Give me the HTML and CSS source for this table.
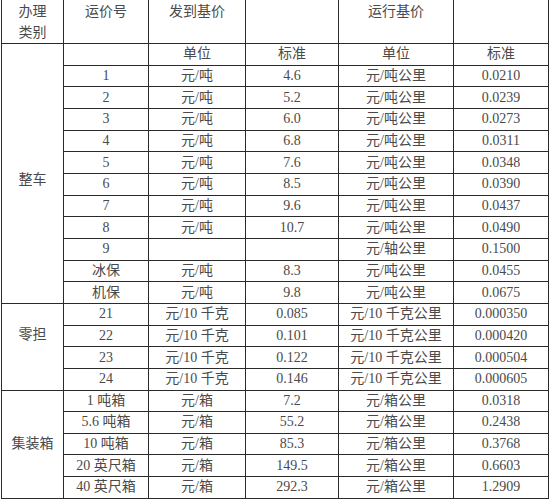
FILE: index.html
```html
<!DOCTYPE html>
<html lang="zh">
<head>
<meta charset="utf-8">
<link rel="stylesheet" href="styles.css">
</head>
<body>
<table class="rates">
  <colgroup>
    <col class="c1"><col class="c2"><col class="c3"><col class="c4"><col class="c5"><col class="c6">
  </colgroup>
  <tr class="head">
    <td>办理<br>类别</td>
    <td>运价号</td>
    <td>发到基价</td>
    <td></td>
    <td>运行基价</td>
    <td></td>
  </tr>
  <tr>
    <td rowspan="12" class="group g-whole">整车</td>
    <td></td><td>单位</td><td>标准</td><td>单位</td><td>标准</td>
  </tr>
  <tr><td>1</td><td>元/吨</td><td>4.6</td><td>元/吨公里</td><td>0.0210</td></tr>
  <tr><td>2</td><td>元/吨</td><td>5.2</td><td>元/吨公里</td><td>0.0239</td></tr>
  <tr><td>3</td><td>元/吨</td><td>6.0</td><td>元/吨公里</td><td>0.0273</td></tr>
  <tr><td>4</td><td>元/吨</td><td>6.8</td><td>元/吨公里</td><td>0.0311</td></tr>
  <tr><td>5</td><td>元/吨</td><td>7.6</td><td>元/吨公里</td><td>0.0348</td></tr>
  <tr><td>6</td><td>元/吨</td><td>8.5</td><td>元/吨公里</td><td>0.0390</td></tr>
  <tr><td>7</td><td>元/吨</td><td>9.6</td><td>元/吨公里</td><td>0.0437</td></tr>
  <tr><td>8</td><td>元/吨</td><td>10.7</td><td>元/吨公里</td><td>0.0490</td></tr>
  <tr><td>9</td><td></td><td></td><td>元/轴公里</td><td>0.1500</td></tr>
  <tr><td>冰保</td><td>元/吨</td><td>8.3</td><td>元/吨公里</td><td>0.0455</td></tr>
  <tr><td>机保</td><td>元/吨</td><td>9.8</td><td>元/吨公里</td><td>0.0675</td></tr>
  <tr>
    <td rowspan="4" class="group g-less">零担</td>
    <td>21</td><td>元/10 千克</td><td>0.085</td><td>元/10 千克公里</td><td>0.000350</td>
  </tr>
  <tr><td>22</td><td>元/10 千克</td><td>0.101</td><td>元/10 千克公里</td><td>0.000420</td></tr>
  <tr><td>23</td><td>元/10 千克</td><td>0.122</td><td>元/10 千克公里</td><td>0.000504</td></tr>
  <tr><td>24</td><td>元/10 千克</td><td>0.146</td><td>元/10 千克公里</td><td>0.000605</td></tr>
  <tr>
    <td rowspan="5" class="group">集装箱</td>
    <td>1 吨箱</td><td>元/箱</td><td>7.2</td><td>元/箱公里</td><td>0.0318</td>
  </tr>
  <tr><td>5.6 吨箱</td><td>元/箱</td><td>55.2</td><td>元/箱公里</td><td>0.2438</td></tr>
  <tr><td>10 吨箱</td><td>元/箱</td><td>85.3</td><td>元/箱公里</td><td>0.3768</td></tr>
  <tr><td>20 英尺箱</td><td>元/箱</td><td>149.5</td><td>元/箱公里</td><td>0.6603</td></tr>
  <tr><td>40 英尺箱</td><td>元/箱</td><td>292.3</td><td>元/箱公里</td><td>1.2909</td></tr>
</table>
</body>
</html>
```

FILE: styles.css
```css
html, body {
  margin: 0;
  padding: 0;
  background: #ffffff;
}

body {
  font-family: "Liberation Serif", "Noto Sans CJK SC", serif;
  font-size: 14px;
  color: #4a4a4a;
}

.rates {
  border-collapse: collapse;
  table-layout: fixed;
  width: 548px;
  margin-left: 1px;
}

.c1 { width: 62px; }
.c2 { width: 85px; }
.c3 { width: 97px; }
.c4 { width: 93px; }
.c5 { width: 115px; }
.c6 { width: 95px; }

.rates td {
  border: 1px solid #2a2a2a;
  height: 20.67px;
  padding: 0;
  text-align: center;
  vertical-align: middle;
  line-height: 16px;
  white-space: nowrap;
}

.rates .head td {
  border-top: none;
  height: 41px;
  vertical-align: top;
  padding-top: 1px;
  line-height: 21px;
}

.rates td.group {
  vertical-align: middle;
}

.rates td.g-whole {
  padding-top: 14px;
}

.rates td.g-less {
  padding-bottom: 24px;
}
```
